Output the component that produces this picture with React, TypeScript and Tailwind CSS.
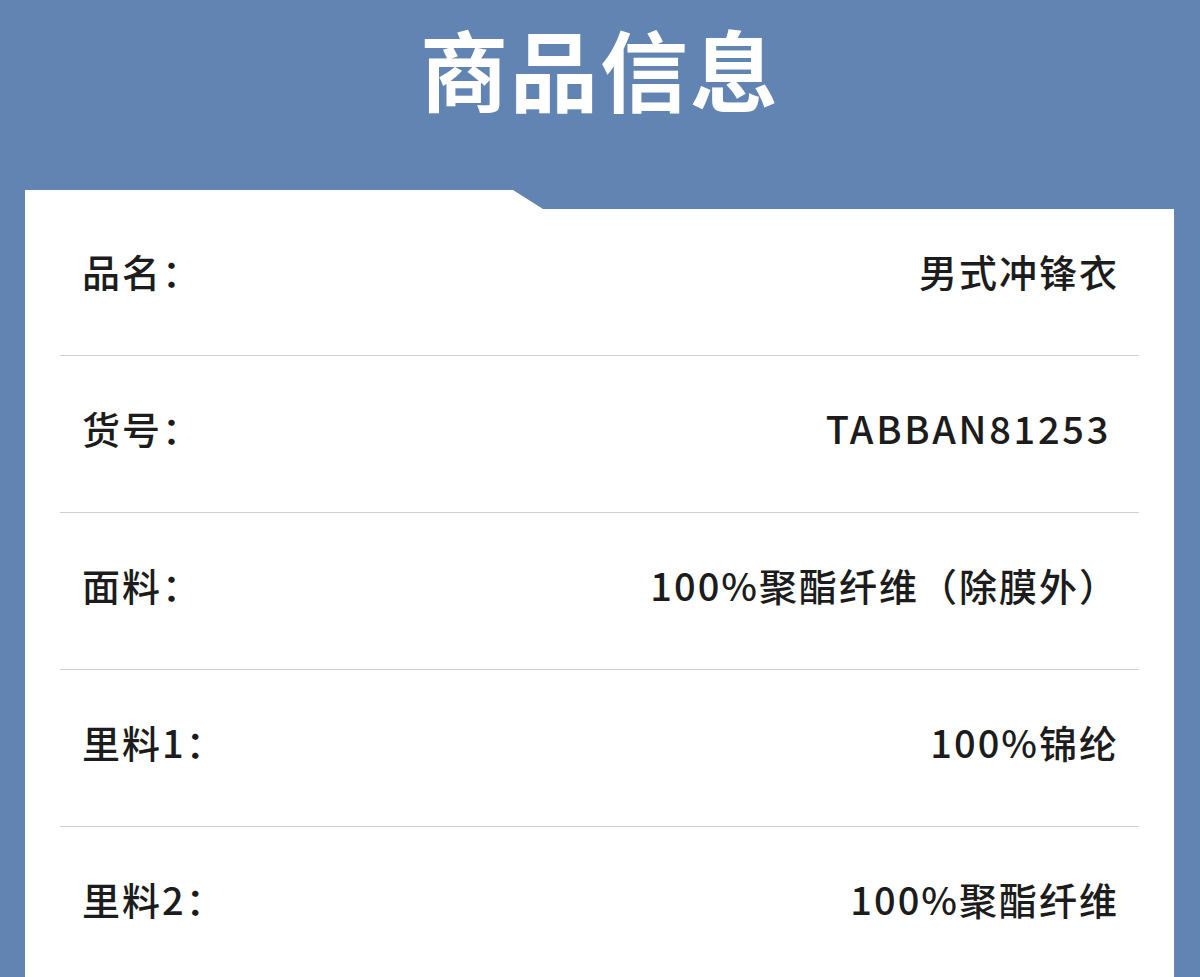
const rows = [
  { label: "品名：", value: "男式冲锋衣" },
  { label: "货号：", value: "TABBAN81253", pad: true },
  { label: "面料：", value: "100%聚酯纤维（除膜外）" },
  { label: "里料1：", value: "100%锦纶" },
  { label: "里料2：", value: "100%聚酯纤维" },
];

export default function App() {
  return (
    <main
      className="min-h-[977px] w-[1200px] overflow-hidden bg-[#6184b2] px-[25px]"
      style={{ fontFamily: '"Noto Sans CJK SC", "Noto Sans", sans-serif' }}
    >
      <h1 className="pt-[12px] text-center text-[88px] font-bold leading-[110px] tracking-[2px] text-white">
        商品信息
      </h1>
      <section className="mt-[68px] min-h-[800px] w-[1149px] bg-white px-[35px] pt-[9px] [clip-path:polygon(0_0,488px_0,518px_19px,100%_19px,100%_100%,0_100%)]">
        {rows.map((row, i) => (
          <div
            key={row.label}
            className={
              "flex h-[157px] items-center justify-between pb-[14px] pl-[22px] pr-[20px] text-[38px] font-medium tracking-[2px] text-[#1c1c1c] " +
              (i < rows.length - 1 ? "border-b border-[#cfcfcf]" : "")
            }
          >
            <span>{row.label}</span>
            <span className={row.pad ? "pr-[8px] tracking-[2.7px]" : ""}>{row.value}</span>
          </div>
        ))}
      </section>
    </main>
  );
}
